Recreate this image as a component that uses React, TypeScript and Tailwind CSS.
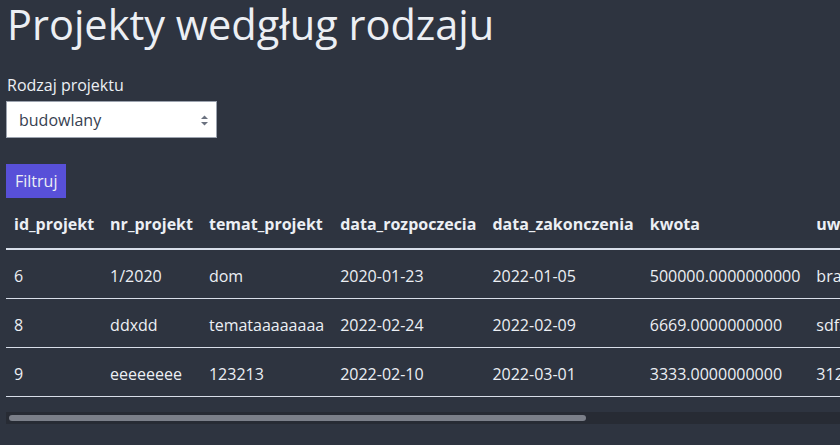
const rows = [
  { id: "6", nr: "1/2020", temat: "dom", start: "2020-01-23", end: "2022-01-05", kwota: "500000.0000000000", uw: "brak" },
  { id: "8", nr: "ddxdd", temat: "temataaaaaaaa", start: "2022-02-24", end: "2022-02-09", kwota: "6669.0000000000", uw: "sdfsdf" },
  { id: "9", nr: "eeeeeeee", temat: "123213", start: "2022-02-10", end: "2022-03-01", kwota: "3333.0000000000", uw: "312312" },
];

const headers = ["id_projekt", "nr_projekt", "temat_projekt", "data_rozpoczecia", "data_zakonczenia", "kwota", "uwagi_projekt", "id_rodzaj", "id_status"];

export default function App() {
  return (
    <main className="min-h-screen bg-[#2e3440] pl-[6px] text-[#eceff4] font-['Open_Sans',sans-serif] overflow-hidden">
      <h1 className="text-[41.5px] leading-[48px] pl-[1px] mb-[25px] whitespace-nowrap">Projekty wedgług rodzaju</h1>

      <form className="flex flex-col items-start">
        <label className="text-[16px] leading-[24px] pl-[1px]">Rodzaj projektu</label>
        <div className="relative mt-[4px]">
          <select
            defaultValue="budowlany"
            className="appearance-none w-[211px] h-[37px] bg-white border border-[#9ca3af] pl-[12px] pr-[28px] text-[16px] text-[#374151] outline-none"
          >
            <option>budowlany</option>
            <option>informatyczny</option>
          </select>
          <svg className="absolute right-[8px] top-[14px] pointer-events-none" width="9" height="11" viewBox="0 0 9 11">
            <path d="M4.5 0.5 L8 4 L1 4 Z" fill="#6b7280" />
            <path d="M1 7 L8 7 L4.5 10.5 Z" fill="#6b7280" />
          </svg>
        </div>
        <button
          type="button"
          className="mt-[26px] h-[34px] px-[9px] bg-[#5850d8] text-[16px] leading-[24px] text-[#eceff4]"
        >
          Filtruj
        </button>
      </form>

      <div className="mt-[2px] overflow-hidden">
        <table className="border-collapse text-[16px] leading-[24px] whitespace-nowrap mb-[15px]">
          <thead>
            <tr className="border-b-2 border-[#d8dee9]">
              {headers.map((h) => (
                <th key={h} className="px-[8px] py-[12px] text-left font-bold">
                  {h}
                </th>
              ))}
            </tr>
          </thead>
          <tbody>
            {rows.map((r) => (
              <tr key={r.id} className="border-b border-[#d8dee9]">
                <td className="px-[8px] pt-[14px] pb-[10px]">{r.id}</td>
                <td className="px-[8px] pt-[14px] pb-[10px]">{r.nr}</td>
                <td className="px-[8px] pt-[14px] pb-[10px]">{r.temat}</td>
                <td className="px-[8px] pt-[14px] pb-[10px]">{r.start}</td>
                <td className="px-[8px] pt-[14px] pb-[10px]">{r.end}</td>
                <td className="px-[8px] pt-[14px] pb-[10px]">{r.kwota}</td>
                <td className="px-[8px] pt-[14px] pb-[10px]">{r.uw}</td>
                <td className="px-[8px] pt-[14px] pb-[10px]">1</td>
                <td className="px-[8px] pt-[14px] pb-[10px]">1</td>
              </tr>
            ))}
          </tbody>
        </table>
        {/* horizontal scrollbar */}
        <div className="h-[12px] bg-[#272b34] p-[3px]">
          <div className="h-full w-[577px] rounded-[3px] bg-[#7b7f89]" />
        </div>
      </div>
    </main>
  );
}
